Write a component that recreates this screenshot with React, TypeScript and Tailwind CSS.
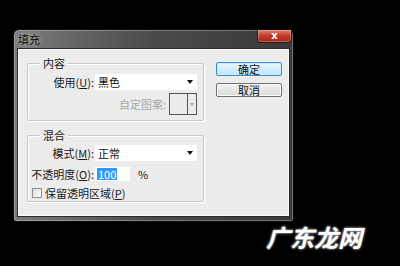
import React from "react";

const cjk = { fontFamily: '"Noto Sans CJK SC", "Noto Sans", sans-serif' };

function Arrow() {
  return (
    <svg width="6" height="4" viewBox="0 0 6 4" className="mr-[4px]">
      <path d="M0 0 L6 0 L3 4 Z" fill="#111" />
    </svg>
  );
}

function Select({ value }: { value: string }) {
  return (
    <div className="w-[102px] h-[16px] bg-white flex items-center justify-between pl-[3px]">
      <span className="text-[11px] leading-[14px] text-[#111]">{value}</span>
      <Arrow />
    </div>
  );
}

function Group({ label, h, children }: { label: string; h: string; children: React.ReactNode }) {
  return (
    <div className={`relative w-[177px] ${h} border border-[#c9c9c9] rounded-[2px] shadow-[inset_1px_1px_0_#ffffff,1px_1px_0_#ffffff]`}>
      <span className="absolute left-[12px] top-[-8px] px-[3px] bg-[#ececec] text-[11px] leading-[14px] text-[#1a1a1a]">
        {label}
      </span>
      {children}
    </div>
  );
}

export default function App() {
  return (
    <div className="relative w-[400px] h-[266px] bg-black overflow-hidden" style={cjk}>
      <div className="pt-[29px] pl-[13px]">
        <div className="w-[281px] h-[193px] rounded-t-[6px] rounded-b-[3px] border border-[#0c0c0c] bg-gradient-to-r from-[#7c7c7c] via-[#4a4a4a] to-[#3a3a3a] shadow-[inset_0_0_0_1px_rgba(255,255,255,0.28)] flex flex-col">
          <div className="h-[18px] flex items-start justify-between">
            <span className="ml-[4px] mt-[2px] text-[11px] leading-[14px] text-[#101010] [text-shadow:0_0_6px_rgba(255,255,255,0.7)]">
              填充
            </span>
            <div className="mr-[1px] w-[35px] h-[13px] rounded-b-[4px] border border-t-0 border-[#3a1410] bg-gradient-to-b from-[#e08070] via-[#c0392b] to-[#a02a1c] shadow-[inset_0_0_0_1px_rgba(255,255,255,0.25)] flex items-center justify-center">
              <span className="text-white text-[10px] font-bold leading-[10px] [font-family:'DejaVu_Sans',sans-serif]">x</span>
            </div>
          </div>
          <div className="ml-[3px] w-[273px] h-[169px] bg-[#ececec] border border-[#2a2a2a] shadow-[inset_0_0_0_1px_#fafafa] flex pt-[14px] pl-[9px]">
            <div className="flex flex-col">
              <Group label="内容" h="h-[58px]">
                <div className="flex items-center mt-[10px]">
                  <span className="w-[67px] text-right pr-[1px] text-[11px] leading-[14px] text-[#1a1a1a]">使用(<u>U</u>):</span>
                  <Select value="黑色" />
                </div>
                <div className="flex items-center justify-end mt-[3px] pr-[6px]">
                  <span className="mr-[3px] text-[11px] leading-[14px] text-[#a8a8a8]">自定图案:</span>
                  <div className="w-[28px] h-[22px] border border-[#555] bg-[#ececec] flex">
                    <div className="w-[18px] h-full border-r border-[#555]" />
                    <div className="flex-1 flex items-center justify-center">
                      <svg width="4" height="3" viewBox="0 0 4 3"><path d="M0 0 L4 0 L2 3 Z" fill="#aaa" /></svg>
                    </div>
                  </div>
                </div>
              </Group>
              <div className="h-[14px]" />
              <Group label="混合" h="h-[67px]">
                <div className="flex items-center mt-[9px]">
                  <span className="w-[67px] text-right pr-[1px] text-[11px] leading-[14px] text-[#1a1a1a]">模式(<u>M</u>):</span>
                  <Select value="正常" />
                </div>
                <div className="flex items-center mt-[6px]">
                  <span className="w-[67px] text-right pr-[1px] text-[11px] leading-[14px] text-[#1a1a1a]">不透明度(<u>O</u>):</span>
                  <div className="w-[35px] h-[14px] bg-white flex items-center pl-[2px]">
                    <span className="bg-[#3399ff] text-white text-[11px] leading-[12px] px-[1px]">100</span>
                  </div>
                  <span className="ml-[8px] text-[11px] leading-[14px] text-[#1a1a1a]">%</span>
                </div>
                <div className="flex items-center mt-[5px] ml-[4px]">
                  <div className="w-[10px] h-[10px] border border-[#8e8f8f] bg-gradient-to-br from-[#dcdcdc] to-[#ffffff]" />
                  <span className="ml-[3px] text-[11px] leading-[14px] text-[#1a1a1a]">保留透明区域(<u>P</u>)</span>
                </div>
              </Group>
            </div>
            <div className="ml-[12px] flex flex-col gap-[7px] -mt-[1px]">
              <div className="w-[66px] h-[14px] rounded-[2px] border border-[#3c8dcf] bg-gradient-to-b from-[#eaf6fd] to-[#bee6fd] shadow-[inset_0_0_0_1px_#c8ecff] flex items-center justify-center">
                <span className="text-[11px] leading-[12px] text-[#111]">确定</span>
              </div>
              <div className="w-[66px] h-[14px] rounded-[2px] border border-[#707070] bg-gradient-to-b from-[#f2f2f2] to-[#dcdcdc] shadow-[inset_0_0_0_1px_#fbfbfb] flex items-center justify-center">
                <span className="text-[11px] leading-[12px] text-[#111]">取消</span>
              </div>
            </div>
          </div>
        </div>
      </div>
      <div className="absolute left-[266px] top-[222px] text-[24px] leading-[30px] font-bold italic text-white tracking-[0px] [text-shadow:0_0_3px_#aaaaaa,0_0_2px_#888888]">
        广东龙网
      </div>
    </div>
  );
}
